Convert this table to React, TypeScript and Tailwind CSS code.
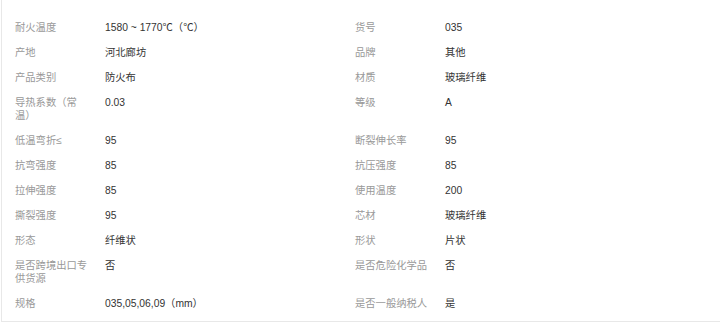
import React from "react";

const rows: [string, string, string, string][] = [
  ["耐火温度", "1580 ~ 1770℃（℃）", "货号", "035"],
  ["产地", "河北廊坊", "品牌", "其他"],
  ["产品类别", "防火布", "材质", "玻璃纤维"],
  ["导热系数（常温）", "0.03", "等级", "A"],
  ["低温弯折≤", "95", "断裂伸长率", "95"],
  ["抗弯强度", "85", "抗压强度", "85"],
  ["拉伸强度", "85", "使用温度", "200"],
  ["撕裂强度", "95", "芯材", "玻璃纤维"],
  ["形态", "纤维状", "形状", "片状"],
  ["是否跨境出口专供货源", "否", "是否危险化学品", "否"],
  ["规格", "035,05,06,09（mm）", "是否一般纳税人", "是"],
];

function Cell({ label, value }: { label: string; value: string }) {
  return (
    <div className="flex w-[340px] py-[6px]">
      <div className="w-[90px] shrink-0 pr-[16px] text-[#999999]">{label}</div>
      <div className="flex-1 text-[#333333]">{value}</div>
    </div>
  );
}

export default function App() {
  return (
    <div
      className="w-[720px] h-[332px] bg-white"
      style={{ fontFamily: '"Liberation Sans", "Noto Sans CJK SC", sans-serif' }}
    >
      <div className="ml-[1px] border-l border-b border-[#e8e8e8] pl-[13px] pt-[15px] pb-[5px] text-[10.3px] leading-[13px]">
        {rows.map((r, i) => (
          <div key={i} className="flex">
            <Cell label={r[0]} value={r[1]} />
            <Cell label={r[2]} value={r[3]} />
          </div>
        ))}
      </div>
    </div>
  );
}
